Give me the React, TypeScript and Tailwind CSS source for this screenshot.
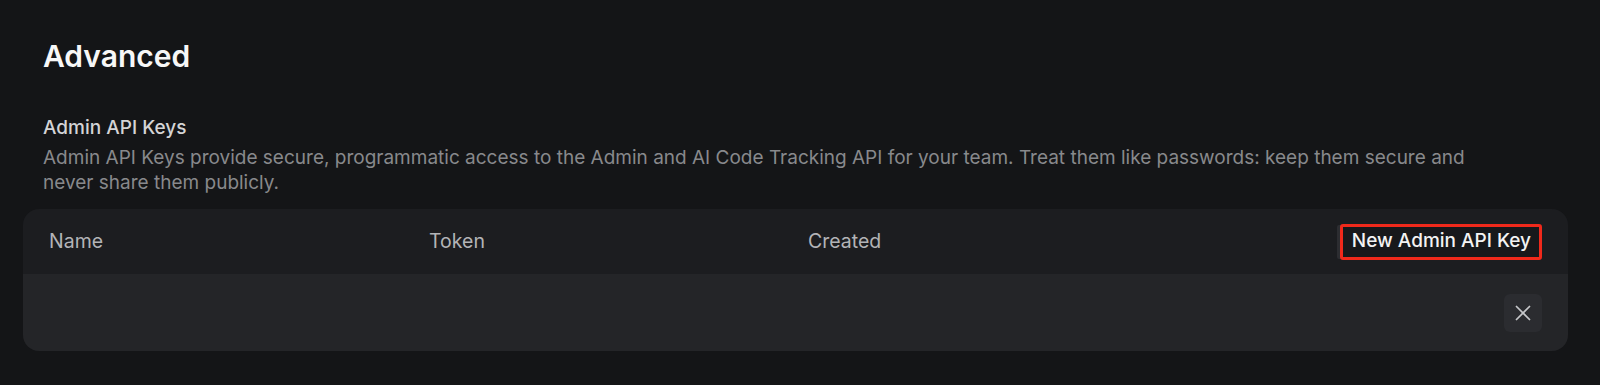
import { X } from "lucide-react"

const font = { fontFamily: "Inter, 'Noto Sans', sans-serif" }

export default function App() {
  return (
    <div
      className="min-h-screen bg-[#141517] pl-[43px] pr-[52px] pt-[38px] antialiased"
      style={font}
    >
      <h1 className="text-[30px] leading-[36px] font-semibold text-[#f7f7f7]">
        Advanced
      </h1>

      <section className="mt-[42px]">
        <h2 className="text-[19px] leading-6 font-medium text-[#d4d4d6]">
          Admin API Keys
        </h2>
        <p className="mt-[5px] text-[19px] leading-[25px] text-[#88898c]">
          Admin API Keys provide secure, programmatic access to the Admin and AI Code
          Tracking API for your team. Treat them like passwords: keep them secure and
          <br />
          never share them publicly.
        </p>

        {/* keys table */}
        <div className="-mx-5 mt-[14px] rounded-2xl overflow-hidden">
          <div className="flex items-center h-[65px] bg-[#1c1d20] px-[26px] text-[19.5px] text-[#b3b4b7]">
            <div className="w-[380px]">Name</div>
            <div className="w-[379px]">Token</div>
            <div className="flex-1">Created</div>
            <button className="h-9 rounded-[3px] border-[3px] border-[#f0291b] bg-[#17181b] pl-[9px] pr-[8px] text-[19px] font-medium text-[#f3f3f3] shadow-[-4px_0_0_-1px_#2c2d31]">
              New Admin API Key
            </button>
          </div>

          <div className="flex items-center justify-end h-[77px] bg-[#242528] px-[26px]">
            <button className="flex items-center justify-center w-[38px] h-[38px] rounded-md bg-[#2b2c30] text-[#c6c7ca]">
              <X size={26} strokeWidth={1.6} />
            </button>
          </div>
        </div>
      </section>
    </div>
  )
}
